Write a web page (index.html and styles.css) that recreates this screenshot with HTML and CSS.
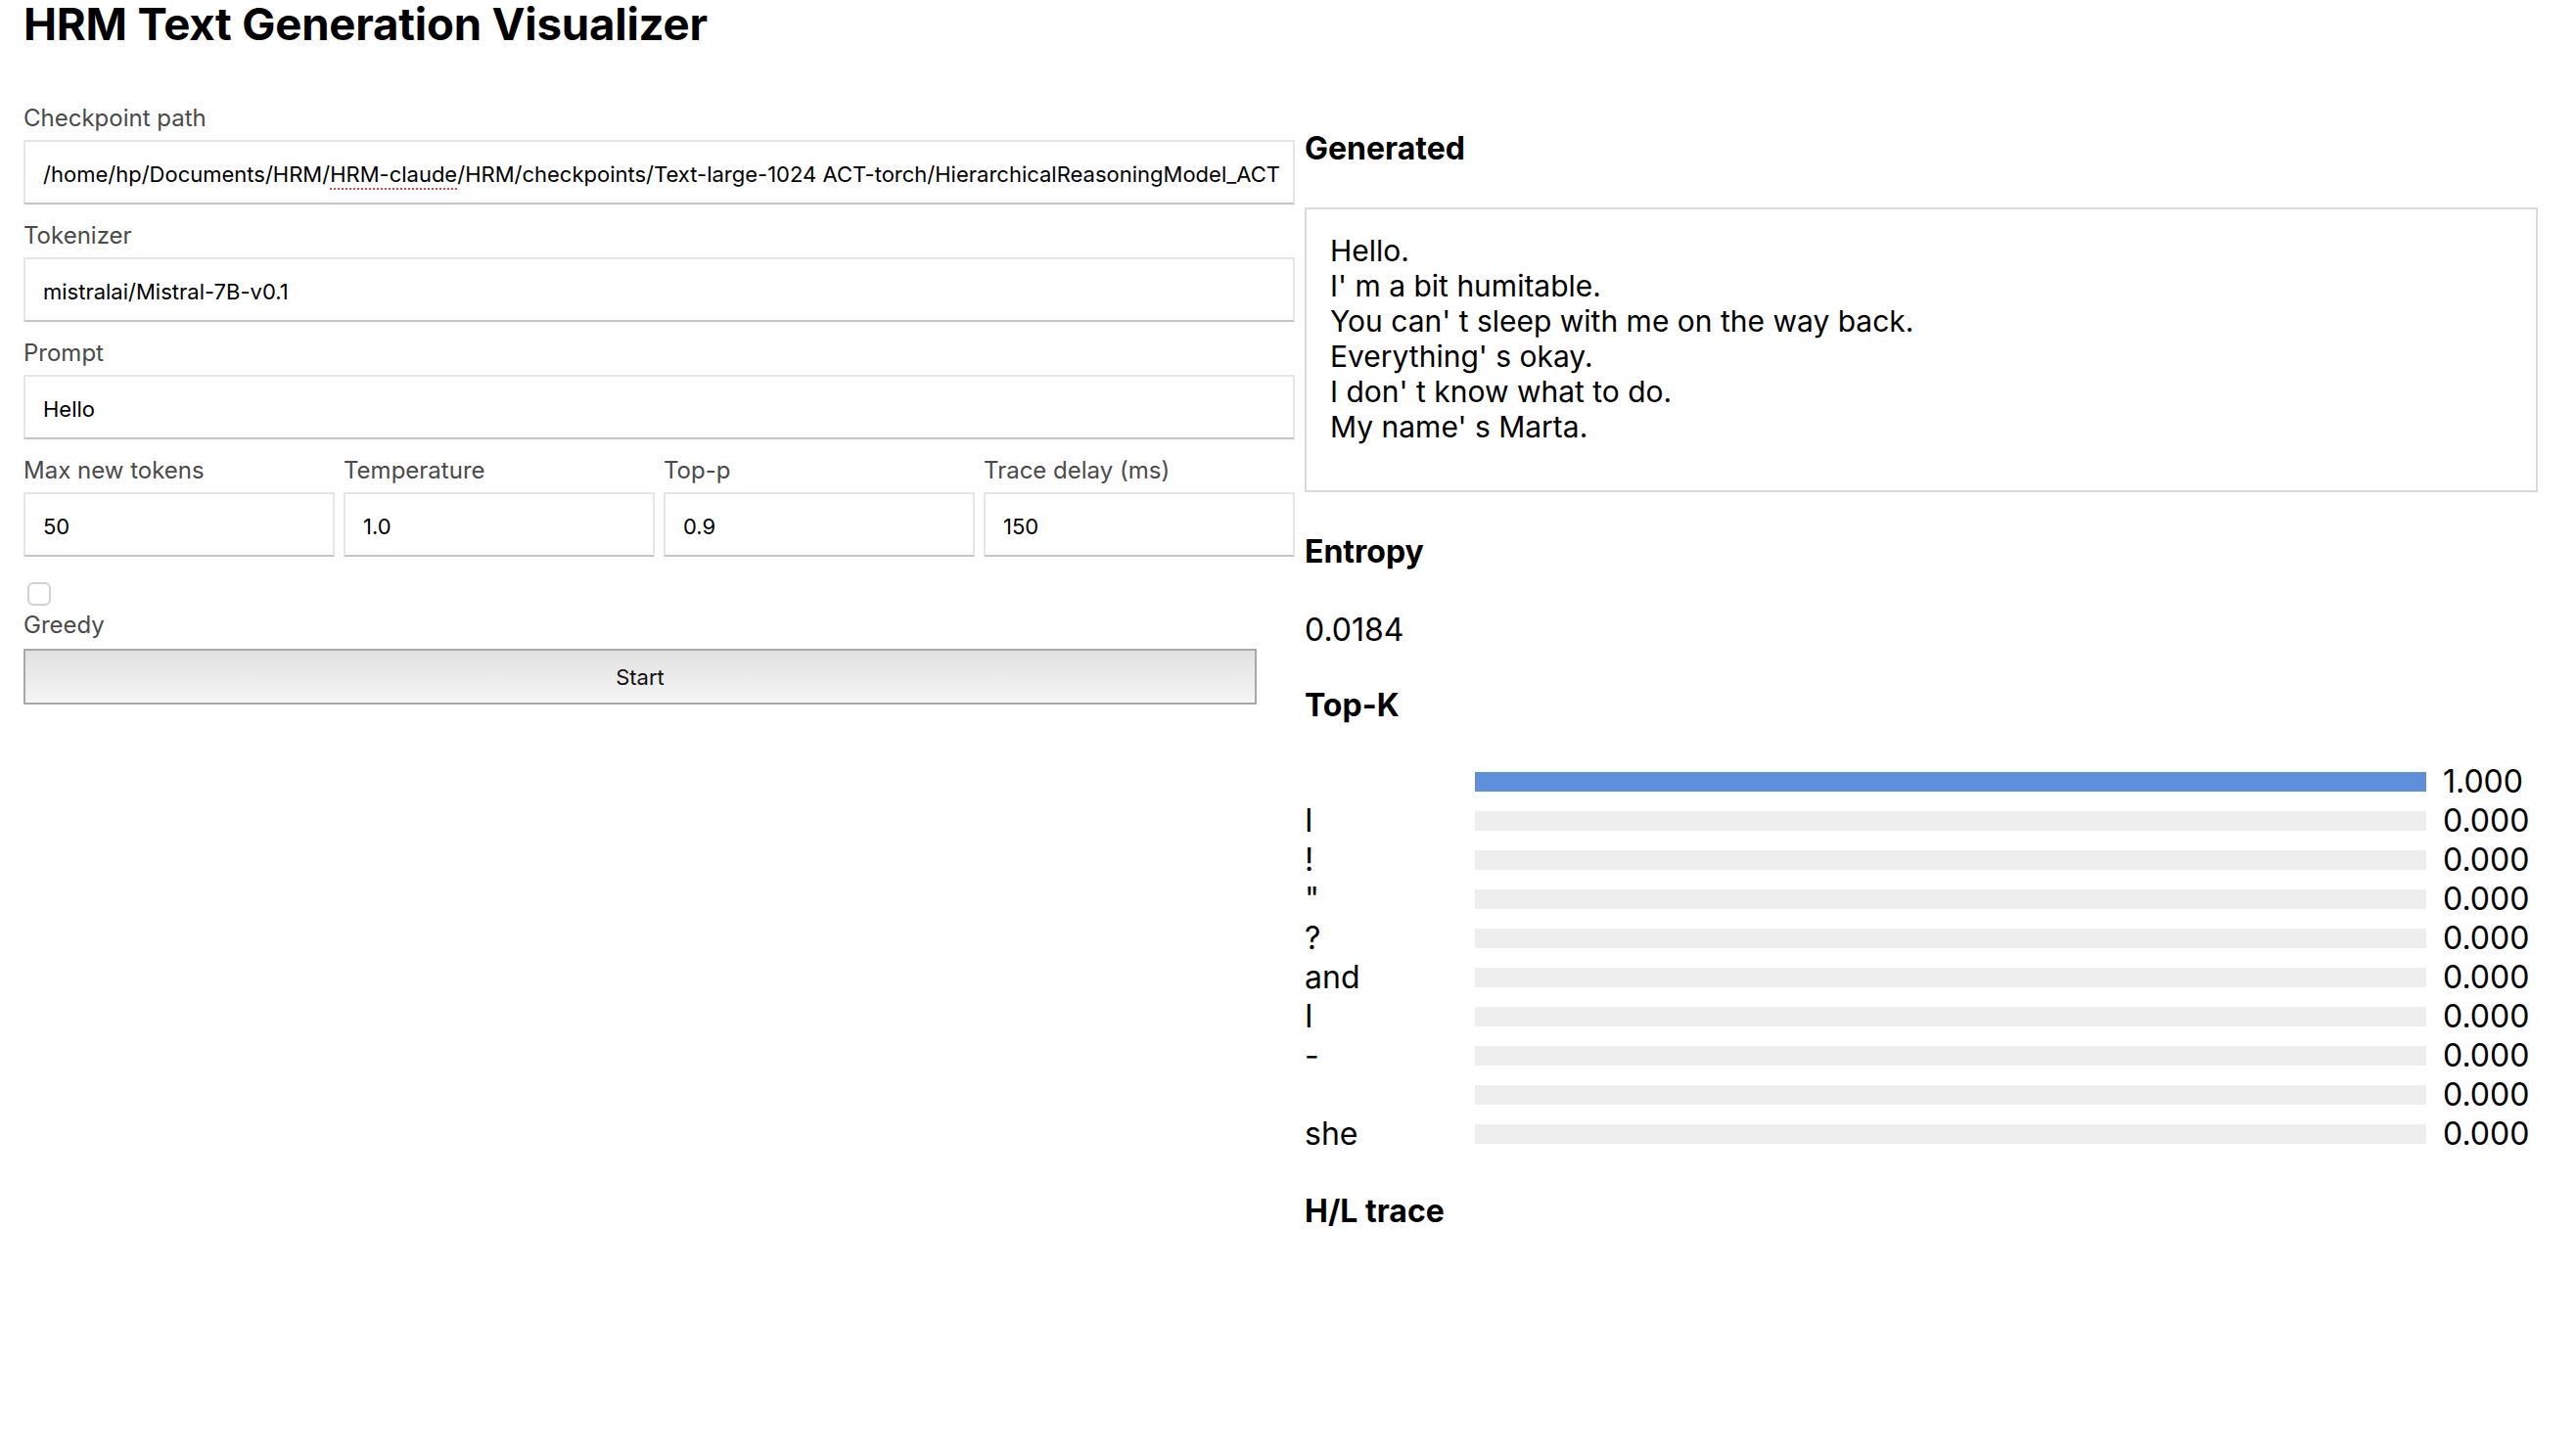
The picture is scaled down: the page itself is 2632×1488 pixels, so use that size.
FILE: index.html
```html
<!DOCTYPE html>
<html lang="en">
<head>
<meta charset="utf-8">
<title>HRM Text Generation Visualizer</title>
<link rel="stylesheet" href="styles.css">
</head>
<body>
<h1 class="title">HRM Text Generation Visualizer</h1>
<main class="layout">
  <section class="controls">
    <div class="field">
      <label class="label">Checkpoint path</label>
      <div class="input input-text" contenteditable="true" spellcheck="true">/home/hp/Documents/HRM/<span class="misspelled">HRM-claude</span>/HRM/checkpoints/Text-large-1024 ACT-torch/HierarchicalReasoningModel_ACT</div>
    </div>
    <div class="field">
      <label class="label" for="tok">Tokenizer</label>
      <input class="input" id="tok" type="text" value="mistralai/Mistral-7B-v0.1">
    </div>
    <div class="field">
      <label class="label" for="prompt">Prompt</label>
      <input class="input" id="prompt" type="text" value="Hello">
    </div>
    <div class="params">
      <div class="field field-inline">
        <label class="label" for="max">Max new tokens</label>
        <input class="input" id="max" type="text" value="50">
      </div>
      <div class="field field-inline">
        <label class="label" for="temp">Temperature</label>
        <input class="input" id="temp" type="text" value="1.0">
      </div>
      <div class="field field-inline">
        <label class="label" for="topp">Top-p</label>
        <input class="input" id="topp" type="text" value="0.9">
      </div>
      <div class="field field-inline">
        <label class="label" for="delay">Trace delay (ms)</label>
        <input class="input" id="delay" type="text" value="150">
      </div>
    </div>
    <div class="greedy">
      <input class="check" id="greedy" type="checkbox">
      <label class="label" for="greedy">Greedy</label>
    </div>
    <button class="start" type="button">Start</button>
  </section>

  <section class="output">
    <h2 class="heading">Generated</h2>
    <div class="generated">Hello.<br>I' m a bit humitable.<br>You can' t sleep with me on the way back.<br>Everything' s okay.<br>I don' t know what to do.<br>My name' s Marta.</div>

    <h2 class="heading entropy-title">Entropy</h2>
    <div class="entropy">0.0184</div>

    <h2 class="heading topk-title">Top-K</h2>
    <div class="topk">
      <div class="row"><span class="tok"> </span><div class="bar"><div class="fill" style="width:100%"></div></div><span class="val">1.000</span></div>
      <div class="row"><span class="tok">I</span><div class="bar"><div class="fill" style="width:0%"></div></div><span class="val">0.000</span></div>
      <div class="row"><span class="tok">!</span><div class="bar"><div class="fill" style="width:0%"></div></div><span class="val">0.000</span></div>
      <div class="row"><span class="tok">"</span><div class="bar"><div class="fill" style="width:0%"></div></div><span class="val">0.000</span></div>
      <div class="row"><span class="tok">?</span><div class="bar"><div class="fill" style="width:0%"></div></div><span class="val">0.000</span></div>
      <div class="row"><span class="tok">and</span><div class="bar"><div class="fill" style="width:0%"></div></div><span class="val">0.000</span></div>
      <div class="row"><span class="tok">I</span><div class="bar"><div class="fill" style="width:0%"></div></div><span class="val">0.000</span></div>
      <div class="row"><span class="tok">-</span><div class="bar"><div class="fill" style="width:0%"></div></div><span class="val">0.000</span></div>
      <div class="row"><span class="tok"> </span><div class="bar"><div class="fill" style="width:0%"></div></div><span class="val">0.000</span></div>
      <div class="row"><span class="tok">she</span><div class="bar"><div class="fill" style="width:0%"></div></div><span class="val">0.000</span></div>
    </div>

    <h2 class="heading trace">H/L trace</h2>
  </section>
</main>
</body>
</html>
```

FILE: styles.css
```css
html, body {
  background: #ffffff;
}

body {
  margin: 0;
  padding: 0 24px;
  font-family: Inter, "Noto Sans", sans-serif;
  color: #000;
}

.title {
  margin: 0;
  padding-top: 1px;
  font-size: 45.6px;
  line-height: 48px;
  font-weight: 700;
  letter-spacing: -0.2px;
}

.layout {
  display: grid;
  grid-template-columns: 1299px 1260px;
  column-gap: 10px;
  margin-top: 57px;
  align-items: start;
}

.controls {
  display: flex;
  flex-direction: column;
}

.field {
  display: flex;
  flex-direction: column;
  gap: 7px;
  margin-bottom: 17px;
}

.field-inline {
  margin-bottom: 0;
}

.label {
  display: block;
  font-size: 24px;
  line-height: 30px;
  color: #4a4a4a;
}

.input {
  box-sizing: border-box;
  width: 100%;
  height: 66px;
  margin: 0;
  border: 2px solid #e6e6e6;
  border-bottom-color: #c4c4c4;
  border-radius: 0;
  padding: 3px 18px 0;
  font-family: Inter, "Noto Sans", sans-serif;
  font-size: 22px;
  color: #000;
  background: #fff;
  outline: none;
}

.input-text {
  padding-top: 20px;
  line-height: 26px;
  white-space: nowrap;
  overflow: hidden;
}

.misspelled {
  text-decoration: underline dotted #e0453a;
  text-underline-offset: 6px;
  text-decoration-thickness: 2px;
}

.params {
  display: grid;
  grid-template-columns: repeat(4, 318px);
  column-gap: 9px;
}

.greedy {
  display: flex;
  flex-direction: column;
  align-items: flex-start;
  margin-top: 26px;
  gap: 5px;
}

.check {
  appearance: none;
  -webkit-appearance: none;
  box-sizing: border-box;
  width: 24px;
  height: 24px;
  margin: 0 0 0 4px;
  border: 2px solid #d2d2d2;
  border-radius: 6px;
  background: #fff;
}

.start {
  box-sizing: border-box;
  width: 1260px;
  height: 57px;
  margin-top: 9px;
  border: 2px solid #a8a8a8;
  border-radius: 0;
  background: linear-gradient(#e1e1e1, #f5f5f5);
  font-family: Inter, "Noto Sans", sans-serif;
  font-size: 22px;
  color: #111;
}

.output {
  padding-top: 26px;
}

.heading {
  margin: 0;
  font-size: 32px;
  line-height: 40px;
  font-weight: 700;
}

.entropy-title {
  margin-top: 41px;
}

.topk-title {
  margin-top: 37px;
}

.trace {
  margin-top: 39px;
}

.generated {
  box-sizing: border-box;
  margin-top: 40px;
  height: 291px;
  border: 2px solid #dadada;
  padding: 24px 24px;
  font-size: 30px;
  line-height: 36px;
}

.entropy {
  margin-top: 40px;
  font-size: 32px;
  line-height: 40px;
}

.topk {
  margin-top: 38px;
}

.row {
  display: grid;
  grid-template-columns: 157px 972px auto;
  column-gap: 17px;
  align-items: center;
  height: 40px;
  font-size: 32px;
  line-height: 40px;
}

.tok {
  white-space: pre;
}

.bar {
  height: 20px;
  background: #eeeeee;
}

.fill {
  height: 100%;
  background: #5e8fdb;
}
```
